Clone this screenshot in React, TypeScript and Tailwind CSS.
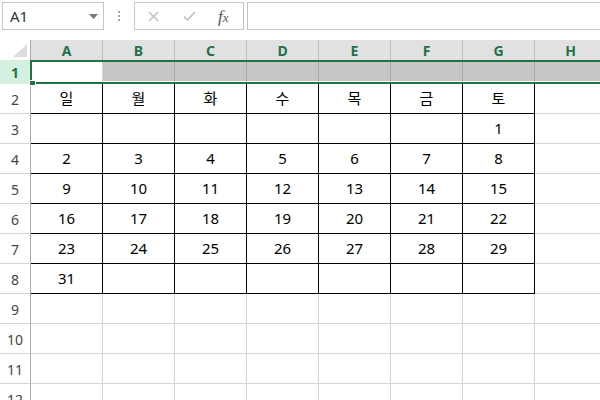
import React from "react";

const COLS = ["A", "B", "C", "D", "E", "F", "G", "H"];

const CAL: string[][] = [
  ["일", "월", "화", "수", "목", "금", "토"],
  ["", "", "", "", "", "", "1"],
  ["2", "3", "4", "5", "6", "7", "8"],
  ["9", "10", "11", "12", "13", "14", "15"],
  ["16", "17", "18", "19", "20", "21", "22"],
  ["23", "24", "25", "26", "27", "28", "29"],
  ["31", "", "", "", "", "", ""],
];

const FONT = { fontFamily: '"Noto Sans", "Noto Sans CJK KR", sans-serif' };

function FormulaBar() {
  return (
    <div className="flex h-[40px] items-start bg-white pt-[2px]">
      <div className="ml-[2px] flex h-[28px] w-[102px] items-center justify-between border border-[#c6c6c6] pl-[7px] pr-[5px]">
        <span className="text-[15px] text-[#333]">A1</span>
        <svg width="9" height="5" viewBox="0 0 9 5">
          <path d="M0 0h9L4.5 5z" fill="#777" />
        </svg>
      </div>
      <div className="flex h-[28px] w-[30px] flex-col items-center justify-center gap-[2px]">
        <span className="h-[2px] w-[2px] bg-[#aaa]" />
        <span className="h-[2px] w-[2px] bg-[#aaa]" />
        <span className="h-[2px] w-[2px] bg-[#aaa]" />
      </div>
      <div className="flex h-[28px] w-[110px] items-center border border-[#c6c6c6]">
        <svg className="ml-[13px]" width="11" height="11" viewBox="0 0 11 11">
          <path d="M1 1l9 9M10 1l-9 9" stroke="#bdbdbd" strokeWidth="1.3" />
        </svg>
        <svg className="ml-[24px]" width="13" height="10" viewBox="0 0 13 10">
          <path d="M1 5.5l3.5 3.5L12 1" stroke="#bdbdbd" strokeWidth="1.6" fill="none" />
        </svg>
        <span
          className="ml-[22px] text-[17px] italic leading-none text-[#555]"
          style={{ fontFamily: '"Liberation Serif", serif' }}
        >
          f<span className="text-[13px]">x</span>
        </span>
      </div>
      <div className="ml-[3px] h-[28px] flex-1 border-y border-l border-[#c6c6c6]" />
    </div>
  );
}

function HeaderRow() {
  return (
    <div className="flex h-[20px]">
      <div className="flex w-[31px] shrink-0 items-end justify-end border-r border-[#ababab] bg-white pb-[3px] pr-[3px]">
        <svg width="14" height="13" viewBox="0 0 14 13">
          <path d="M14 0v13H0z" fill="#dcdcdc" />
        </svg>
      </div>
      {COLS.map((c) => (
        <div
          key={c}
          className="flex w-[72px] shrink-0 items-center justify-center border-r border-[#bdbdbd] bg-[#e1e1e1] text-[14px] font-bold text-[#217346]"
        >
          {c}
        </div>
      ))}
    </div>
  );
}

function RowOne() {
  return (
    <div className="flex h-[24px]">
      <div className="flex w-[31px] shrink-0 items-end justify-center border-r border-[#ababab] bg-[#d3f0e0] pb-[1px] text-[14px] font-bold text-[#217346]">
        1
      </div>
      {COLS.map((c, i) => (
        <div
          key={c}
          className={`w-[72px] shrink-0 border-b-[3px] border-r border-b-white ${
            i === 0 ? "border-r-[#d4d4d4] bg-white" : "border-r-[#ababab] bg-[#c6c6c6]"
          }`}
        />
      ))}
    </div>
  );
}

function Row({ n, cells }: { n: number; cells: string[] | null }) {
  return (
    <div className="flex h-[30px]">
      <div className="flex w-[31px] shrink-0 items-end justify-center border-b border-r border-b-[#d4d4d4] border-r-[#ababab] pb-[3px] text-[14px] text-[#444]">
        {n}
      </div>
      {COLS.map((c, i) => {
        const cal = cells !== null && i < 7;
        return (
          <div
            key={c}
            className={`flex w-[72px] shrink-0 items-center justify-center border-b border-r text-[15px] text-black ${
              cal ? "border-black" : "border-[#d4d4d4]"
            }`}
          >
            {cal ? cells[i] : ""}
          </div>
        );
      })}
    </div>
  );
}

export default function App() {
  return (
    <div className="relative h-[400px] w-[600px] overflow-hidden bg-white" style={FONT}>
      <FormulaBar />
      <HeaderRow />
      <RowOne />
      {CAL.map((r, i) => (
        <Row key={i} n={i + 2} cells={r} />
      ))}
      {[9, 10, 11, 12].map((n) => (
        <Row key={n} n={n} cells={null} />
      ))}
      <div className="absolute left-[30px] top-[60px] h-[24px] w-[600px] border-2 border-[#217346]" />
      <div className="absolute left-[29px] top-[80px] h-[6px] w-[7px] border border-white bg-[#217346]" />
    </div>
  );
}
